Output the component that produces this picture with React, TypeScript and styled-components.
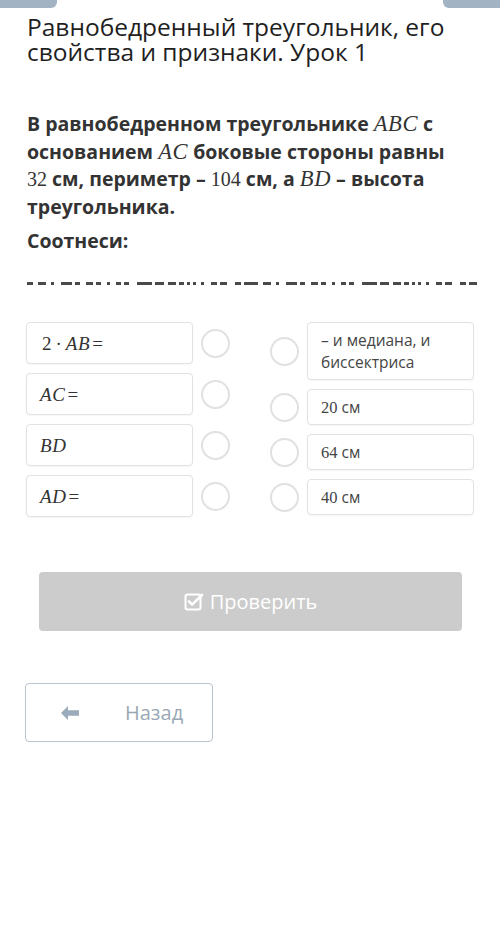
import styled, { createGlobalStyle } from "styled-components";

const GlobalStyle = createGlobalStyle`
  html, body {
    margin: 0;
    padding: 0;
    background: #ffffff;
  }
  body {
    font-family: "Open Sans", "Noto Sans", sans-serif;
    color: #2b2b2b;
  }
`;

// widths of the dashes in the clipped header strip: [dash, gap]
const dashPattern: [number, number][] = [
  [4, 3], [5, 3], [2, 4], [7, 2], [3, 4], [4, 2], [3, 4], [2, 4], [3, 2], [3, 5],
  [9, 2], [6, 2], [5, 2], [3, 2], [2, 2], [2, 3], [2, 4], [4, 2], [4, 5], [4, 2], [5, 0],
];

const leftItems = ["2 · AB =", "AC =", "BD", "AD ="];
const rightItems = ["– и медиана, и биссектриса", "20 см", "64 см", "40 см"];

function MathText({ expr }: { expr: string }) {
  return (
    <Formula>
      {expr.split("").map((ch, i) =>
        /[A-Z]/.test(ch) ? <Var key={i}>{ch}</Var> : ch === " " ? null : <Op key={i} $wide={ch === "·"}>{ch}</Op>
      )}
    </Formula>
  );
}

function ValueText({ text }: { text: string }) {
  const m = text.match(/^(\d+)\s(.*)$/);
  if (!m) return <span>{text}</span>;
  return (
    <span>
      <Num>{m[1]}</Num> {m[2]}
    </span>
  );
}

function Dashes() {
  return (
    <DashRow>
      {dashPattern.map(([w, g], i) => (
        <Dash key={i} style={{ width: w * 1.6, marginRight: g * 1.6 }} />
      ))}
    </DashRow>
  );
}

function CheckSquare() {
  return (
    <svg width="20" height="20" viewBox="0 0 20 20" fill="none">
      <rect x="1.5" y="2.5" width="15" height="15" rx="2" stroke="#fff" strokeWidth="2" />
      <path d="M5 9.5l3.2 3.2L18 3" stroke="#fff" strokeWidth="2.6" strokeLinecap="round" strokeLinejoin="round" />
    </svg>
  );
}

function ArrowLeft() {
  return (
    <svg width="20" height="16" viewBox="0 0 20 16">
      <path d="M1 8l7-7v4.3h11v5.4H8V15z" fill="#9aabbb" />
    </svg>
  );
}

export default function App() {
  return (
    <Page>
      <GlobalStyle />
      <TopTabs>
        <Tab $side="left" />
        <Tab $side="right" />
      </TopTabs>
      <Title>Равнобедренный треугольник, его свойства и признаки. Урок 1</Title>
      <Question>
        В равнобедренном треугольнике <Var $big>ABC</Var> с основанием <Var $big>AC</Var> боковые стороны равны{" "}
        <Num $big>32</Num> см, периметр – <Num $big>104</Num> см, а <Var $big>BD</Var> – высота треугольника.
      </Question>
      <Prompt>Соотнеси:</Prompt>
      <HeaderStrip>
        <Dashes />
        <Dashes />
      </HeaderStrip>
      <MatchGrid>
        <Column>
          {leftItems.map((t) => (
            <Row key={t}>
              <Card $tall>
                <MathText expr={t} />
              </Card>
              <Dot />
            </Row>
          ))}
        </Column>
        <Column>
          {rightItems.map((t) => (
            <Row key={t}>
              <Dot />
              <Card>
                <ValueText text={t} />
              </Card>
            </Row>
          ))}
        </Column>
      </MatchGrid>
      <CheckButton>
        <CheckSquare />
        Проверить
      </CheckButton>
      <BackButton>
        <ArrowLeft />
        <span>Назад</span>
      </BackButton>
    </Page>
  );
}

const Page = styled.div`
  width: 500px;
  min-height: 938px;
  box-sizing: border-box;
  padding: 0 26px 0 27px;
  display: flex;
  flex-direction: column;
`;

const TopTabs = styled.div`
  display: flex;
  justify-content: space-between;
  margin: 0 -26px 0 -27px;
  height: 8px;
`;

const Tab = styled.div<{ $side: "left" | "right" }>`
  width: 57px;
  height: 8px;
  background: #a2b4c4;
  border-radius: ${(p) => (p.$side === "left" ? "0 0 6px 0" : "0 0 0 6px")};
`;

const Title = styled.h1`
  margin: 6px 0 0;
  font-size: 24.5px;
  line-height: 25px;
  font-weight: 400;
  color: #1f1f1f;
`;

const Question = styled.p`
  margin: 46px 0 0;
  width: 440px;
  font-size: 19.5px;
  line-height: 27.5px;
  font-weight: 700;
  color: #333;
`;

const Prompt = styled.p`
  margin: 7px 0 0;
  font-size: 19.5px;
  line-height: 27px;
  font-weight: 700;
  color: #333;
`;

const HeaderStrip = styled.div`
  display: flex;
  justify-content: space-between;
  margin-top: 28px;
  height: 3px;
`;

const DashRow = styled.div`
  display: flex;
  width: 222px;
`;

const Dash = styled.span`
  display: block;
  height: 3px;
  background: #4a4a4a;
  flex-shrink: 0;
`;

const MatchGrid = styled.div`
  display: flex;
  justify-content: space-between;
  margin: 37px 0 0 -1px;
`;

const Column = styled.div`
  display: flex;
  flex-direction: column;
  gap: 9px;
  width: 204px;
`;

const Row = styled.div`
  display: flex;
  align-items: center;
  justify-content: space-between;
`;

const Card = styled.div<{ $tall?: boolean }>`
  box-sizing: border-box;
  width: 167px;
  min-height: ${(p) => (p.$tall ? "42px" : "35px")};
  padding: 6px 13px;
  display: flex;
  align-items: center;
  border: 1px solid #e2e2e2;
  border-radius: 4px;
  box-shadow: 0 1px 2px rgba(0, 0, 0, 0.04);
  font-size: 15.5px;
  line-height: 22px;
  color: #454545;
  background: #fff;
`;

const Dot = styled.div`
  box-sizing: border-box;
  width: 29px;
  height: 29px;
  border-radius: 50%;
  border: 2px solid #e1e1e1;
  background: #fff;
  flex-shrink: 0;
`;

const Formula = styled.span`
  font-family: "Liberation Serif", "DejaVu Serif", serif;
  font-size: 19px;
  line-height: 1;
  color: #333;
  display: inline-flex;
  align-items: baseline;
`;

const Var = styled.span<{ $big?: boolean }>`
  font-family: "Liberation Serif", "DejaVu Serif", serif;
  font-style: italic;
  font-weight: 400;
  font-size: ${(p) => (p.$big ? "22.5px" : "inherit")};
  line-height: 1;
  letter-spacing: 0.6px;
`;

const Op = styled.span<{ $wide?: boolean }>`
  font-family: "Liberation Serif", "DejaVu Serif", serif;
  font-style: normal;
  margin: ${(p) => (p.$wide ? "0 4px" : "0 0 0 2px")};
`;

const Num = styled.span<{ $big?: boolean }>`
  font-family: "Liberation Serif", "DejaVu Serif", serif;
  font-weight: 400;
  font-size: ${(p) => (p.$big ? "20px" : "16.5px")};
  line-height: 1;
`;

const CheckButton = styled.button`
  margin: 55px 12px 0 12px;
  height: 59px;
  border: none;
  border-radius: 4px;
  background: #cccccc;
  color: #fff;
  font-family: "Open Sans", "Noto Sans", sans-serif;
  font-size: 20px;
  display: flex;
  align-items: center;
  justify-content: center;
  gap: 6px;
`;

const BackButton = styled.button`
  margin: 52px 0 0 -2px;
  width: 188px;
  height: 59px;
  box-sizing: border-box;
  border: 1px solid #b8c4ce;
  border-radius: 4px;
  background: #fff;
  color: #9aa8b5;
  font-family: "Open Sans", "Noto Sans", sans-serif;
  font-size: 20px;
  display: flex;
  align-items: center;
  padding: 0 0 0 34px;
  gap: 45px;
`;
